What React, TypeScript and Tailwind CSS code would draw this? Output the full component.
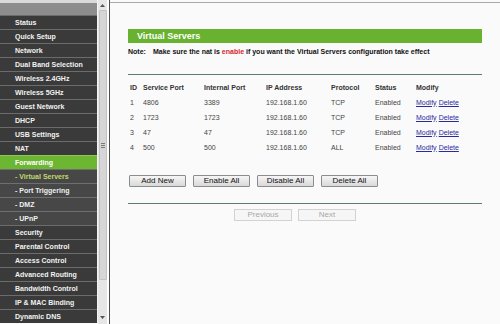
import React from "react";

type Item = { label: string; sub?: boolean; active?: boolean; current?: boolean };

const items: Item[] = [
  { label: "Status" },
  { label: "Quick Setup" },
  { label: "Network" },
  { label: "Dual Band Selection" },
  { label: "Wireless 2.4GHz" },
  { label: "Wireless 5GHz" },
  { label: "Guest Network" },
  { label: "DHCP" },
  { label: "USB Settings" },
  { label: "NAT" },
  { label: "Forwarding", active: true },
  { label: "- Virtual Servers", sub: true, current: true },
  { label: "- Port Triggering", sub: true },
  { label: "- DMZ", sub: true },
  { label: "- UPnP", sub: true },
  { label: "Security" },
  { label: "Parental Control" },
  { label: "Access Control" },
  { label: "Advanced Routing" },
  { label: "Bandwidth Control" },
  { label: "IP & MAC Binding" },
  { label: "Dynamic DNS" },
];

const rows = [
  ["1", "4806", "3389", "192.168.1.60", "TCP", "Enabled"],
  ["2", "1723", "1723", "192.168.1.60", "TCP", "Enabled"],
  ["3", "47", "47", "192.168.1.60", "TCP", "Enabled"],
  ["4", "500", "500", "192.168.1.60", "ALL", "Enabled"],
];

function Btn({ label }: { label: string }) {
  return (
    <button className="w-[57px] h-[12px] flex items-center justify-center border border-[#8c8c8c] rounded-[1px] bg-gradient-to-b from-[#f6f6f6] to-[#d9d9d9] text-[8px] leading-none text-[#111]">
      {label}
    </button>
  );
}

function DisBtn({ label }: { label: string }) {
  return (
    <button className="w-[58px] h-[12px] flex items-center justify-center border border-[#d2d2d2] bg-[#f6f6f6] text-[8px] leading-none text-[#a8a8a8]">
      {label}
    </button>
  );
}

export default function App() {
  return (
    <div className="flex w-[500px] h-[324px] overflow-hidden bg-[#fafafa] font-['Liberation_Sans',Arial,sans-serif]">
      {/* Sidebar */}
      <div className="w-[97px] flex flex-col shrink-0">
        <div className="h-[3px] bg-[#dadada]" />
        <div className="h-[12px] bg-[#8d8d8d]" />
        {items.map((it) => (
          <div
            key={it.label}
            className={
              "h-[14px] shrink-0 border-t flex items-center pl-[15px] text-[7px] font-bold leading-none whitespace-nowrap " +
              (it.active
                ? "bg-[#6cb631] border-[#86c65a] text-white"
                : it.sub
                ? "bg-[#474747] border-[#6e6e6e] " + (it.current ? "text-[#c3d86a]" : "text-[#f0f0f0]")
                : "bg-[#3a3a3a] border-[#6c6c6c] text-[#f2f2f2]")
            }
          >
            {it.label}
          </div>
        ))}
      </div>
      {/* Scrollbar */}
      <div className="w-[10px] shrink-0 bg-[#e6e6e6] border-l border-[#f4f4f4] flex flex-col items-center">
        <div className="h-[10px] flex items-center justify-center">
          <svg width="5" height="3" viewBox="0 0 5 3"><path d="M0 3 L2.5 0 L5 3 Z" fill="#555" /></svg>
        </div>
        <div className="w-[8px] h-[270px] bg-[#d6d6d6] border border-[#c2c2c2] rounded-[1px] flex items-center justify-center">
          <div className="flex flex-col gap-[1px]">
            <div className="w-[4px] h-px bg-[#7a7a7a]" />
            <div className="w-[4px] h-px bg-[#7a7a7a]" />
            <div className="w-[4px] h-px bg-[#7a7a7a]" />
          </div>
        </div>
        <div className="flex-1 flex items-end justify-center pb-[5px]">
          <svg width="5" height="3" viewBox="0 0 5 3"><path d="M0 0 L2.5 3 L5 0 Z" fill="#555" /></svg>
        </div>
      </div>
      <div className="w-[2px] shrink-0 bg-white" />
      <div className="w-px shrink-0 bg-[#4f4f4f]" />
      {/* Main */}
      <div className="flex-1 flex flex-col">
        <div className="h-[2px]" />
        <div className="h-px bg-[#a9a9a9]" />
        <div className="pl-[18px] pr-[18px] pt-[26px] flex flex-col">
          <div className="h-[14px] bg-[#68b22f] flex items-center pl-[9px] text-white font-bold text-[9px] leading-none">
            Virtual Servers
          </div>
          <div className="mt-[5px] flex text-[7px] font-bold leading-none text-[#111]">
            <span className="w-[25px]">Note:</span>
            <span>
              Make sure the nat is <span className="text-[#d8262c]">enable</span> if you want the Virtual Servers configuration take effect
            </span>
          </div>
          <div className="mt-[19px] h-px bg-[#5f7a70]" />
          {/* Table */}
          <div className="mt-[8px] pl-[2px] flex flex-col text-[7px] leading-none text-[#444]">
            <div className="h-[8px] flex items-center font-bold text-[#333]">
              <span className="w-[13px]">ID</span>
              <span className="w-[61px]">Service Port</span>
              <span className="w-[62px]">Internal Port</span>
              <span className="w-[65px]">IP Address</span>
              <span className="w-[44px]">Protocol</span>
              <span className="w-[41px]">Status</span>
              <span>Modify</span>
            </div>
            {rows.map((r) => (
              <div key={r[0]} className="mt-[7px] h-[8px] flex items-center">
                <span className="w-[13px]">{r[0]}</span>
                <span className="w-[61px]">{r[1]}</span>
                <span className="w-[62px]">{r[2]}</span>
                <span className="w-[65px]">{r[3]}</span>
                <span className="w-[44px]">{r[4]}</span>
                <span className="w-[41px]">{r[5]}</span>
                <span className="flex gap-[2px] text-[#2a2aa0] underline">
                  <span>Modify</span>
                  <span>Delete</span>
                </span>
              </div>
            ))}
          </div>
          <div className="mt-[24px] pl-px flex gap-[7px]">
            <Btn label="Add New" />
            <Btn label="Enable All" />
            <Btn label="Disable All" />
            <Btn label="Delete All" />
          </div>
          <div className="mt-[16px] h-px bg-[#5f7a70]" />
          <div className="mt-[5px] flex justify-center gap-[6px] pr-[20px]">
            <DisBtn label="Previous" />
            <DisBtn label="Next" />
          </div>
        </div>
      </div>
    </div>
  );
}
